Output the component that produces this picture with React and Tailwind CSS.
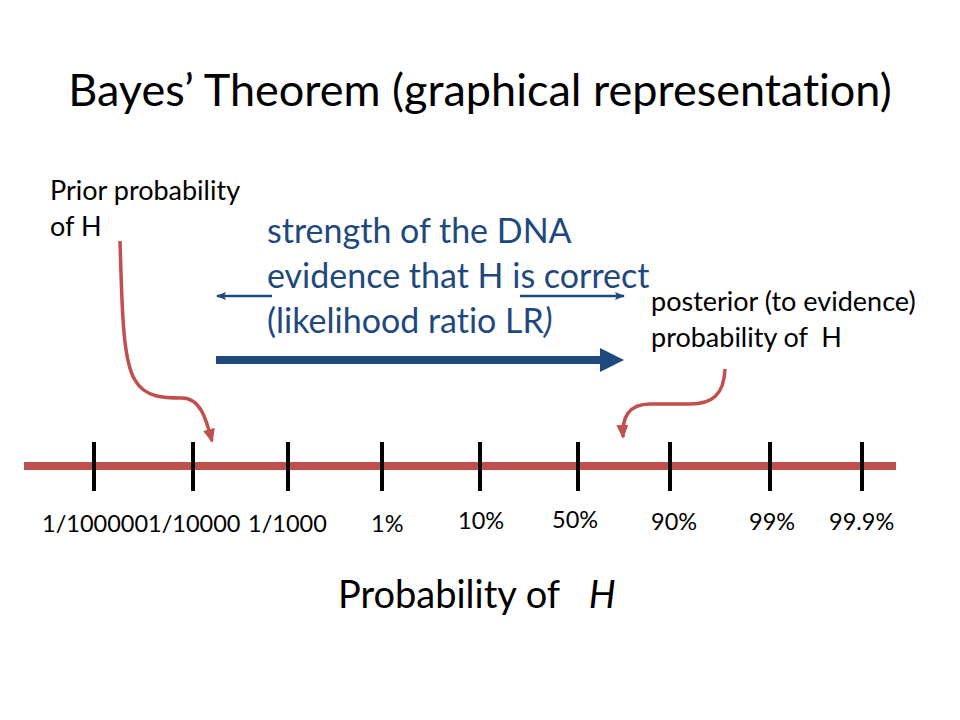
import React from "react";

const font = { fontFamily: "Lato, 'Open Sans', sans-serif" };

function Label({ left, top, children }) {
  return (
    <span
      className="absolute whitespace-nowrap text-[23.5px] leading-[28px] text-black"
      style={{ left, top }}
    >
      {children}
    </span>
  );
}

export default function App() {
  const labels = [
    { t: "1/1000001/10000", x: 42, b: 532 },
    { t: "1/1000", x: 248, b: 532 },
    { t: "1%", x: 371, b: 532 },
    { t: "10%", x: 458, b: 529 },
    { t: "50%", x: 552, b: 528 },
    { t: "90%", x: 651, b: 530 },
    { t: "99%", x: 749, b: 530 },
    { t: "99.9%", x: 829, b: 530 },
  ];
  const ticks = [94, 193, 288, 382, 480, 578, 670, 770, 862];
  return (
    <div
      className="relative w-[960px] h-[720px] bg-white overflow-hidden text-black [font-variant-ligatures:none]"
      style={font}
    >
      <svg
        className="absolute inset-0"
        width="960"
        height="720"
        viewBox="0 0 960 720"
      >
        <defs>
          <marker
            id="bh"
            markerWidth="10"
            markerHeight="8"
            refX="9"
            refY="4"
            orient="auto"
            markerUnits="userSpaceOnUse"
          >
            <path d="M0 0 L10 4 L0 8 L2 4 Z" fill="#1f497d" />
          </marker>
          <marker
            id="rh"
            markerWidth="14"
            markerHeight="12"
            refX="12"
            refY="6"
            orient="auto"
            markerUnits="userSpaceOnUse"
          >
            <path d="M0 0 L14 6 L0 12 Z" fill="#c0504d" />
          </marker>
        </defs>
        {/* main red axis */}
        <line x1="24" y1="466" x2="896" y2="466" stroke="#c0504d" strokeWidth="8" />
        {ticks.map((x) => (
          <line key={x} x1={x} y1="442" x2={x} y2="491" stroke="#000" strokeWidth="4" />
        ))}
        {/* small blue arrows */}
        <line x1="272" y1="296" x2="217" y2="296" stroke="#1f497d" strokeWidth="2.5" markerEnd="url(#bh)" />
        <line x1="520" y1="296" x2="624" y2="296" stroke="#1f497d" strokeWidth="2.5" markerEnd="url(#bh)" />
        {/* thick blue arrow */}
        <line x1="216" y1="360" x2="602" y2="360" stroke="#1f497d" strokeWidth="8" />
        <polygon points="600,348 624,360 600,372" fill="#1f497d" />
        {/* red curved arrows */}
        <path
          d="M120 241 C 122 300, 122 360, 135 380 C 145 398, 165 398, 182 398 C 200 398, 206 418, 212 441"
          fill="none"
          stroke="#c0504d"
          strokeWidth="3.5"
          markerEnd="url(#rh)"
        />
        <path
          d="M725 369 C 724 395, 712 404, 690 404 L 650 404 C 628 404, 622 418, 623 437"
          fill="none"
          stroke="#c0504d"
          strokeWidth="3.5"
          markerEnd="url(#rh)"
        />
      </svg>

      <div className="absolute left-0 right-0 top-[62px] text-center text-[45px] leading-[54px] whitespace-nowrap">
        Bayes’ Theorem (graphical representation)
      </div>

      <div className="absolute left-[50px] top-[172px] text-[27px] leading-[36px] whitespace-nowrap">
        <div>Prior probability</div>
        <div>of H</div>
      </div>

      <div className="absolute left-[267px] top-[207px] text-[34px] leading-[45px] whitespace-nowrap text-[#1f497d]">
        <div>strength of the DNA</div>
        <div>evidence that H is correct</div>
        <div>
          (likelihood ratio LR<span className="italic">)</span>
        </div>
      </div>

      <div className="absolute left-[651px] top-[283px] text-[27px] leading-[36px] whitespace-nowrap">
        <div>posterior (to evidence)</div>
        <div>probability of&nbsp; H</div>
      </div>

      {labels.map((l) => (
        <Label key={l.t} left={l.x} top={l.b - 23}>
          {l.t}
        </Label>
      ))}

      <div className="absolute left-[338px] top-[571px] text-[38px] leading-[44px] whitespace-nowrap">
        Probability of&nbsp;&nbsp; <span className="italic">H</span>
      </div>
    </div>
  );
}
